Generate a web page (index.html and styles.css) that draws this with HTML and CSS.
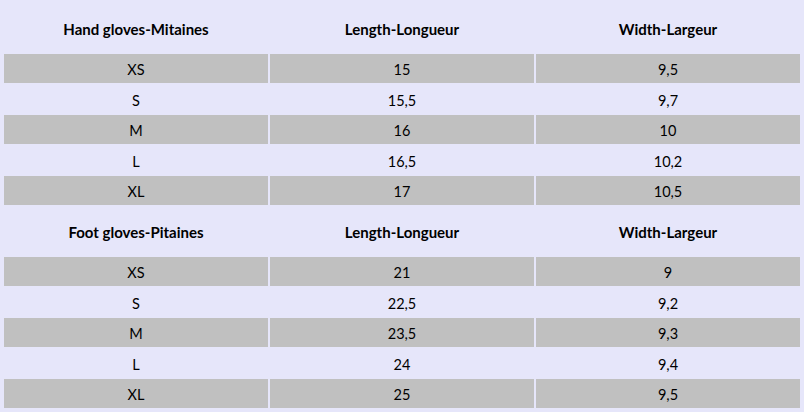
FILE: index.html
```html
<!DOCTYPE html>
<html>
<head>
<meta charset="utf-8">
<link rel="stylesheet" href="styles.css">
</head>
<body>
<div class="sheet">
  <div class="head">Hand gloves-Mitaines</div><div class="head">Length-Longueur</div><div class="head">Width-Largeur</div>
  <div class="cell gray">XS</div><div class="cell gray">15</div><div class="cell gray">9,5</div>
  <div class="cell">S</div><div class="cell">15,5</div><div class="cell">9,7</div>
  <div class="cell gray">M</div><div class="cell gray">16</div><div class="cell gray">10</div>
  <div class="cell">L</div><div class="cell">16,5</div><div class="cell">10,2</div>
  <div class="cell gray">XL</div><div class="cell gray">17</div><div class="cell gray">10,5</div>
  <div class="head">Foot gloves-Pitaines</div><div class="head">Length-Longueur</div><div class="head">Width-Largeur</div>
  <div class="cell gray">XS</div><div class="cell gray">21</div><div class="cell gray">9</div>
  <div class="cell">S</div><div class="cell">22,5</div><div class="cell">9,2</div>
  <div class="cell gray">M</div><div class="cell gray">23,5</div><div class="cell gray">9,3</div>
  <div class="cell">L</div><div class="cell">24</div><div class="cell">9,4</div>
  <div class="cell gray">XL</div><div class="cell gray">25</div><div class="cell gray">9,5</div>
</div>
</body>
</html>
```
FILE: styles.css
```css
html, body {
  margin: 0;
  padding: 0;
  background: #e6e6fa;
}
body {
  font-family: Lato, "Open Sans", sans-serif;
  color: #000;
  width: 804px;
  height: 412px;
  overflow: hidden;
}
.sheet {
  padding: 3.5px 4px 0 4px;
  display: grid;
  grid-template-columns: 1fr 1fr 1fr;
  grid-template-rows: 48.5px repeat(5, 28.5px) 48.5px repeat(5, 28.5px);
  column-gap: 2px;
  row-gap: 2px;
  background: #e6e6fa;
}
.head {
  display: flex;
  align-items: center;
  justify-content: center;
  font-weight: bold;
  font-size: 15px;
  padding-top: 2px;
}
.cell {
  display: flex;
  align-items: center;
  justify-content: center;
  font-size: 14.5px;
  padding-top: 3px;
}
.gray {
  background: #c0c0c0;
}
```
